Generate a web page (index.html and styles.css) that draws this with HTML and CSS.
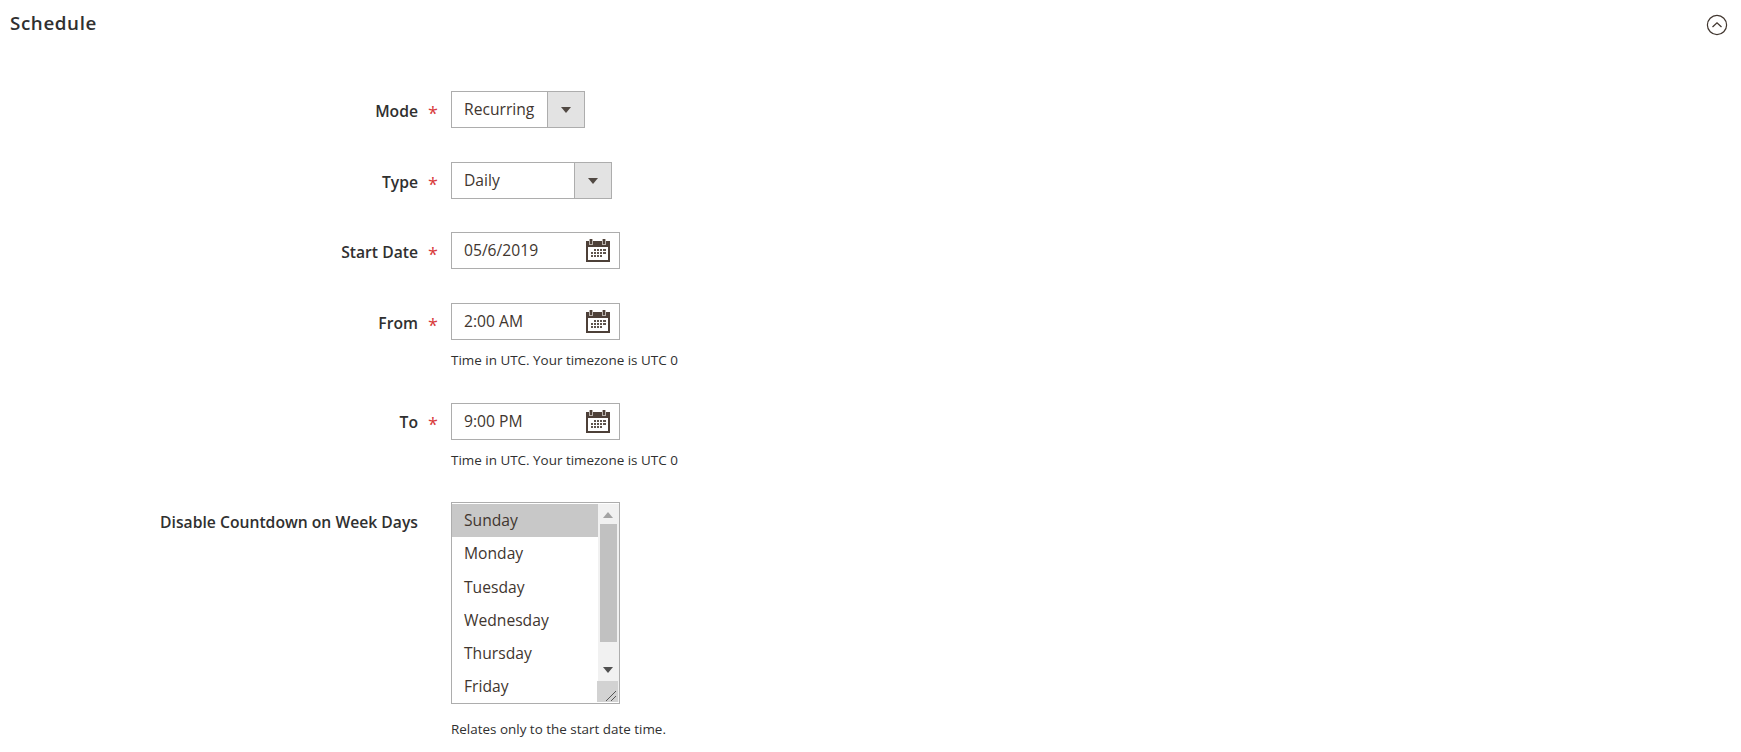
FILE: index.html
```html
<!DOCTYPE html>
<html lang="en">

<head>
    <meta charset="utf-8" />
    <title>Schedule</title>
    <link rel="stylesheet" href="styles.css">
</head>

<body>
    <header class="section-head">
        <h2>Schedule</h2>
        <svg class="collapse-icon" width="22" height="22" viewBox="0 0 22 22">
            <circle cx="11" cy="11" r="9.6" fill="none" stroke="#41362f" stroke-width="1.2" />
            <path d="M6.5 13 L11 8.8 L15.5 13" fill="none" stroke="#41362f" stroke-width="1.3" />
        </svg>
    </header>

    <form class="schedule-form">
        <div class="field field-mode">
            <label class="field-label">Mode</label>
            <span class="required">*</span>
            <div class="field-control">
                <div class="select select-mode">
                    <span class="select-value">Recurring</span>
                    <span class="select-btn"><i class="caret"></i></span>
                </div>
            </div>
        </div>

        <div class="field field-type">
            <label class="field-label">Type</label>
            <span class="required">*</span>
            <div class="field-control">
                <div class="select select-type">
                    <span class="select-value">Daily</span>
                    <span class="select-btn"><i class="caret"></i></span>
                </div>
            </div>
        </div>

        <div class="field field-start">
            <label class="field-label">Start Date</label>
            <span class="required">*</span>
            <div class="field-control">
                <div class="date-input">
                    <span>05/6/2019</span>
                    <svg class="cal-icon" width="24" height="23" viewBox="0 0 24 23">
                        <use href="#cal" />
                    </svg>
                </div>
            </div>
        </div>

        <div class="field field-from">
            <label class="field-label">From</label>
            <span class="required">*</span>
            <div class="field-control">
                <div class="date-input">
                    <span>2:00 AM</span>
                    <svg class="cal-icon" width="24" height="23" viewBox="0 0 24 23">
                        <use href="#cal" />
                    </svg>
                </div>
                <p class="note">Time in UTC. Your timezone is UTC 0</p>
            </div>
        </div>

        <div class="field field-to">
            <label class="field-label">To</label>
            <span class="required">*</span>
            <div class="field-control">
                <div class="date-input">
                    <span>9:00 PM</span>
                    <svg class="cal-icon" width="24" height="23" viewBox="0 0 24 23">
                        <use href="#cal" />
                    </svg>
                </div>
                <p class="note">Time in UTC. Your timezone is UTC 0</p>
            </div>
        </div>

        <div class="field field-days">
            <label class="field-label">Disable Countdown on Week Days</label>
            <span class="required"></span>
            <div class="field-control">
                <div class="listbox">
                    <ul class="listbox-items">
                        <li class="selected">Sunday</li>
                        <li>Monday</li>
                        <li>Tuesday</li>
                        <li>Wednesday</li>
                        <li>Thursday</li>
                        <li>Friday</li>
                    </ul>
                    <div class="scrollbar">
                        <i class="arrow-up"></i>
                        <div class="thumb"></div>
                        <i class="arrow-down"></i>
                    </div>
                    <svg class="grip" width="21" height="21" viewBox="0 0 21 21">
                        <rect width="21" height="21" fill="#d2d2d2" />
                        <path d="M9 20 L19 10 M14 20 L19 15" stroke="#555" stroke-width="1" />
                    </svg>
                </div>
                <p class="note note-days">Relates only to the start date time.</p>
            </div>
        </div>
    </form>

    <svg width="0" height="0" class="defs">
        <symbol id="cal" viewBox="0 0 24 23">
            <path fill="#4d4038" fill-rule="evenodd" d="M0 2h24v21H0z M2 8v13h20V8z" />
            <path fill="#b9b2ac" d="M3 0h4v6H3zM16 0h4v6h-4z" />
            <path fill="#4d4038" d="M4 0h2v5H4zM17 0h2v5h-2z" />
            <path fill="#5f554e" d="M8 10h2v2H8zM11 10h2v2h-2zM14 10h2v2h-2zM17 10h3v2h-3zM5 13h2v2H5zM8 13h2v2H8zM11 13h2v2h-2zM14 13h2v2h-2zM17 13h3v2h-3zM5 16h2v2H5zM8 16h2v2H8zM11 16h2v2h-2zM14 16h2v2h-2z" />
        </symbol>
    </svg>
</body>

</html>
```

FILE: styles.css
```css
html,
body {
    height: 100%;
}

body {
    font-family: "Open Sans", sans-serif;
    background-color: #fff;
    color: #41362f;
    margin: 0;
    overflow: hidden;
}

.section-head {
    display: flex;
    justify-content: space-between;
    padding: 12px 13px 0 10px;
}

.section-head h2 {
    font-size: 18.8px;
    line-height: 22px;
    font-weight: 600;
    letter-spacing: 0.6px;
    color: #303030;
    margin: 0;
}

.collapse-icon {
    margin-top: 2px;
}

.schedule-form {
    padding-top: 55px;
}

.field {
    display: flex;
    align-items: flex-start;
}

.field-label {
    width: 418px;
    text-align: right;
    font-size: 15.7px;
    font-weight: 600;
    line-height: 21px;
    padding-top: 10px;
    color: #303030;
    flex-shrink: 0;
}

.field-to .field-label {
    padding-top: 9px;
}

.required {
    width: 33px;
    flex-shrink: 0;
    padding-left: 10px;
    box-sizing: border-box;
    color: #d83a3a;
    font-size: 18px;
    line-height: 21px;
    padding-top: 12px;
}

.field-to .required {
    padding-top: 11px;
}

.field-mode { margin-bottom: 34px; }
.field-type { margin-bottom: 33px; }
.field-start { margin-bottom: 34px; }
.field-from { margin-bottom: 34px; }
.field-to { margin-bottom: 33px; }

.select,
.date-input {
    display: flex;
    box-sizing: border-box;
    height: 37px;
    border: 1px solid #adadad;
    font-size: 15.65px;
    line-height: 33px;
    color: #41362f;
}

.select {
    line-height: 35px;
}

.select-mode { width: 134px; }
.select-type { width: 161px; }

.select-value {
    flex-grow: 1;
    padding-left: 12px;
}

.select-btn {
    width: 36px;
    display: flex;
    align-items: center;
    justify-content: center;
    background-color: #e3e3e3;
    border-left: 1px solid #adadad;
}

.caret {
    border-left: 5px solid transparent;
    border-right: 5px solid transparent;
    border-top: 6px solid #514943;
}

.date-input {
    width: 169px;
    align-items: center;
    justify-content: space-between;
    padding: 0 9px 0 12px;
}

.cal-icon {
    display: block;
}

.note {
    font-size: 13.45px;
    line-height: 18px;
    margin: 11px 0 0;
    color: #303030;
}

.note-days {
    margin-top: 16px;
}

.listbox {
    display: flex;
    position: relative;
    box-sizing: border-box;
    width: 169px;
    height: 202px;
    border: 1px solid #adadad;
    padding: 1px 0;
    font-size: 15.65px;
}

.listbox-items {
    list-style: none;
    margin: 0;
    padding: 0;
    flex-grow: 1;
    overflow: hidden;
}

.listbox-items li {
    height: 33.300px;
    line-height: 33px;
    padding-left: 12px;
}

.listbox-items .selected {
    background-color: #c8c8c8;
}

.scrollbar {
    width: 21px;
    flex-shrink: 0;
    background-color: #f1f1f1;
    position: relative;
}

.thumb {
    position: absolute;
    top: 20px;
    left: 2px;
    width: 17px;
    height: 118px;
    background-color: #c1c1c1;
}

.arrow-up,
.arrow-down {
    position: absolute;
    left: 5px;
    border-left: 5px solid transparent;
    border-right: 5px solid transparent;
}

.arrow-up {
    top: 8px;
    border-bottom: 6px solid #a3a3a3;
}

.arrow-down {
    top: 163px;
    border-top: 6px solid #505050;
}

.grip {
    position: absolute;
    right: 1px;
    bottom: 1px;
}

.defs {
    position: absolute;
}
```
